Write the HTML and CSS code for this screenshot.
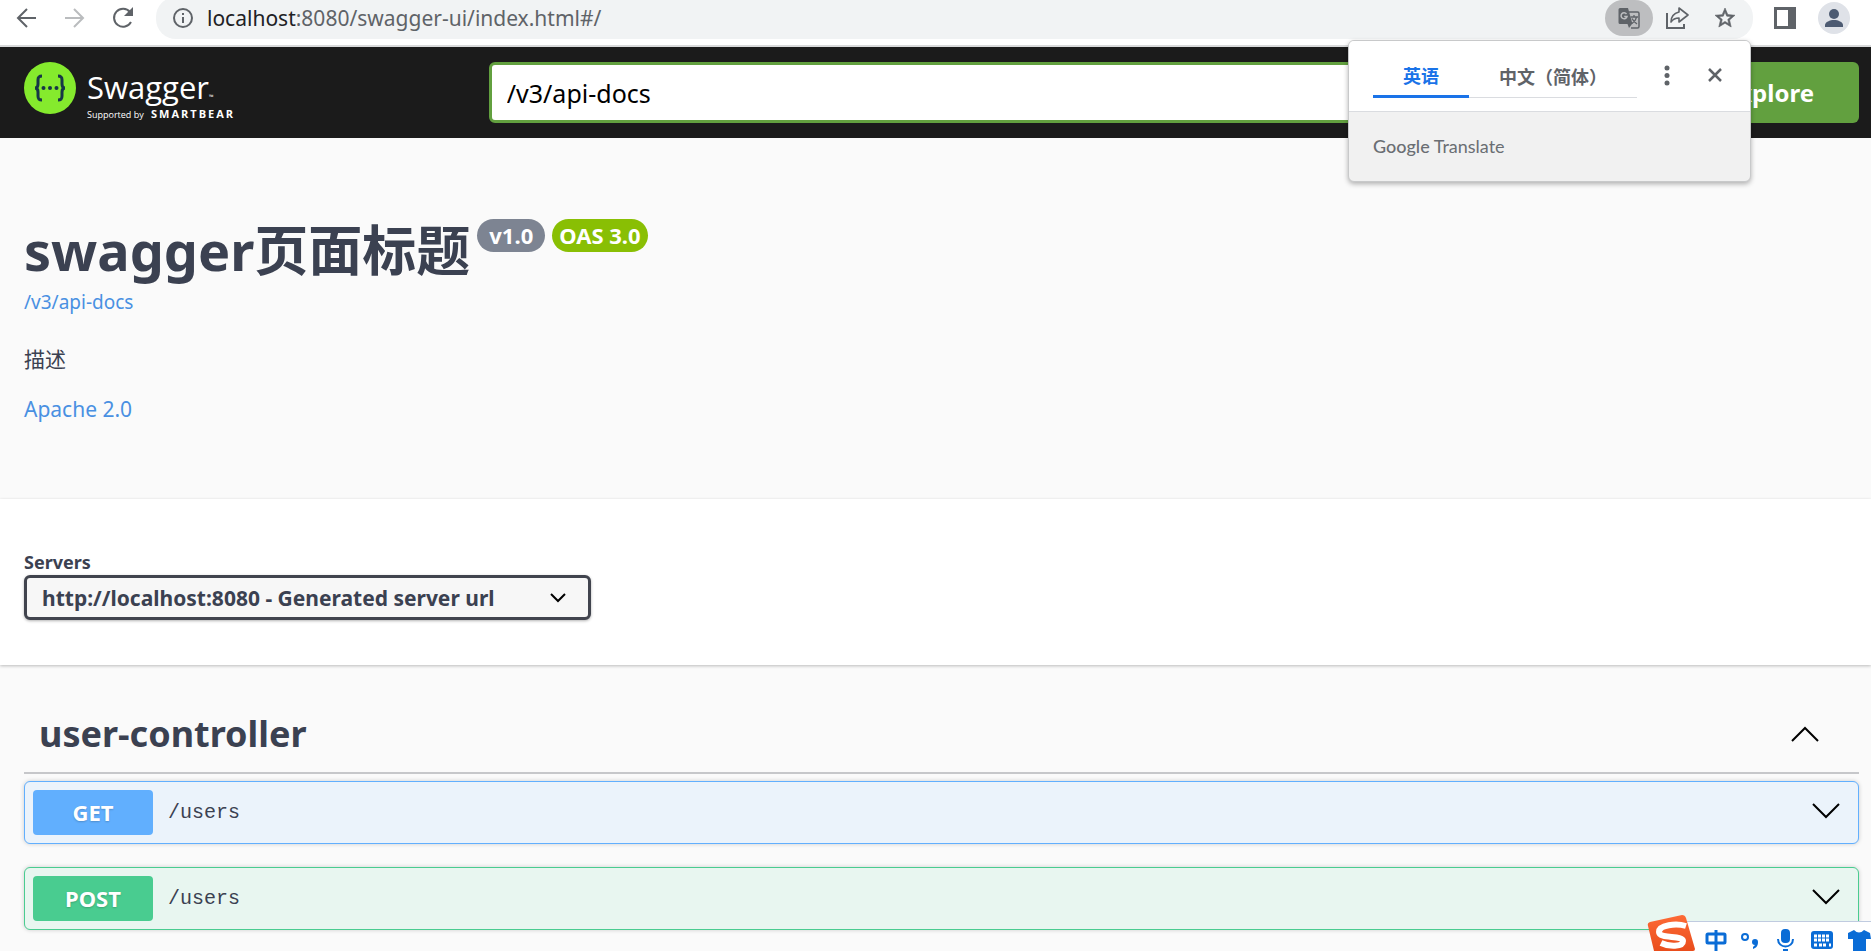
FILE: index.html
```html
<!DOCTYPE html>
<html lang="en">
  <head>
    <meta charset="UTF-8" />
    <meta name="viewport" content="width=device-width, initial-scale=1.0" />
    <title>Swagger UI</title>
    <link rel="stylesheet" href="styles.css">
  </head>
  <body>
    <!-- Browser toolbar -->
    <header class="browser-bar">
      <nav class="browser-nav">
        <button type="button" class="icon-button" aria-label="Back">
          <svg width="24" height="24" viewBox="0 0 24 24" fill="none" stroke="#5f6368" stroke-width="2"><path d="M21 12H3M12 3l-9 9 9 9" /></svg>
        </button>
        <button type="button" class="icon-button" aria-label="Forward">
          <svg width="24" height="24" viewBox="0 0 24 24" fill="none" stroke="#babcbe" stroke-width="2"><path d="M2 12h18M11 3l9 9-9 9" /></svg>
        </button>
        <button type="button" class="icon-button" aria-label="Reload">
          <svg width="24" height="24" viewBox="0 0 24 24" fill="none" stroke="#5f6368" stroke-width="2"><path d="M20 16a9 9 0 1 1-1-10l2 2" /><path d="M22 1v9h-9z" fill="#5f6368" stroke="none" /></svg>
        </button>
      </nav>
      <div class="address">
        <svg width="22" height="22" viewBox="0 0 22 22" fill="none" stroke="#5f6368" stroke-width="2"><circle cx="11" cy="11" r="9" /><path d="M11 10v6M11 6v2" /></svg>
        <span class="address-text"><b>localhost</b>:8080/swagger-ui/index.html#/</span>
        <button type="button" class="icon-button translate-button" aria-label="Translate this page">
          <svg width="24" height="24" viewBox="0 0 24 24" fill="none">
            <path d="M12 6h8.500a1.500 1.500 0 0 1 1.500 1.500v13a1.500 1.500 0 0 1-1.500 1.500H14" stroke="#5f6368" stroke-width="1.500" />
            <path d="M3 2h8l4.500 16H3a1.500 1.500 0 0 1-1.500-1.500v-13A1.500 1.500 0 0 1 3 2z" fill="#5f6368" />
            <path d="M10.500 18h4.500l-3 4z" fill="#5f6368" />
            <path d="M9.500 8A3 3 0 1 0 10 10.500H7.200" stroke="#bdbec0" stroke-width="1.500" />
            <path d="M13.500 11H21M17 9v2M19.500 11c-.5 3-2.500 5-4.500 6.500M15 12.500c1 2 3 4 5 5.500" stroke="#5f6368" stroke-width="1.300" />
          </svg>
        </button>
        <button type="button" class="icon-button" aria-label="Share this page">
          <svg width="24" height="24" viewBox="0 0 24 24" fill="none" stroke="#5f6368" stroke-width="2"><path d="M2 7v15h17v-4" /><path d="M14 2l9 7-9 7v-4c-4 0-6 1-8 4 0-6 4-9 8-10z" stroke-linejoin="round" stroke-width="1.600" /></svg>
        </button>
        <button type="button" class="icon-button" aria-label="Bookmark this page">
          <svg width="24" height="24" viewBox="0 0 24 24" fill="#5f6368" stroke="#5f6368" stroke-width=".6"><path d="M22 9.240l-7.190-.62L12 2 9.190 8.630 2 9.240l5.460 4.730L5.820 21 12 17.270 18.180 21l-1.630-7.030L22 9.240zM12 15.400l-3.760 2.270 1-4.280-3.320-2.880 4.380-.38L12 6.100l1.710 4.040 4.380.38-3.320 2.880 1 4.280L12 15.400z" /></svg>
        </button>
      </div>
      <button type="button" class="icon-button" aria-label="Side panel">
        <svg width="22" height="22" viewBox="0 0 22 22"><path d="M0 0h22v22H0z" fill="#5f6368" /><path d="M3 3h11v16H3z" fill="#fff" /></svg>
      </button>
      <button type="button" class="icon-button" aria-label="Profile">
        <svg width="34" height="34" viewBox="0 0 34 34"><circle cx="17" cy="17" r="16" fill="#dfe2e8" /><circle cx="17" cy="13" r="5" fill="#4d5b72" /><path d="M8 26v-2c0-3 5-5 9-5s9 2 9 5v2z" fill="#4d5b72" /></svg>
      </button>

      <div class="translate-popup">
        <div class="translate-head">
          <div class="translate-tabs">
            <button type="button" class="translate-tab active" lang="zh">英语</button>
            <button type="button" class="translate-tab" lang="zh">中文（简体）</button>
          </div>
          <button type="button" class="icon-button" aria-label="Translate options">
            <svg width="24" height="24" viewBox="0 0 24 24" fill="#5f6368"><circle cx="12" cy="4" r="2.500" /><circle cx="12" cy="11.500" r="2.500" /><circle cx="12" cy="19" r="2.500" /></svg>
          </button>
          <button type="button" class="icon-button" aria-label="Close">
            <svg width="24" height="24" viewBox="0 0 24 24" stroke="#5f6368" stroke-width="2.500"><path d="M6 5l12 12M18 5L6 17" /></svg>
          </button>
        </div>
        <div class="translate-body"><b>Google</b> Translate</div>
      </div>
    </header>

    <!-- Swagger top bar -->
    <div class="topbar">
      <a href="#" class="logo">
        <svg width="52" height="52" viewBox="0 0 52 52">
          <circle cx="26" cy="26" r="26" fill="#85ea2d" />
          <path d="M18 14c-3 0-4 1-4 4v4c0 3-1 4-3 4 2 0 3 1 3 4v4c0 3 1 4 4 4M34 14c3 0 4 1 4 4v4c0 3 1 4 3 4-2 0-3 1-3 4v4c0 3-1 4-4 4" fill="none" stroke="#173647" stroke-width="3" />
          <circle cx="19.500" cy="26" r="2" fill="#173647" /><circle cx="26" cy="26" r="2" fill="#173647" /><circle cx="32.500" cy="26" r="2" fill="#173647" />
        </svg>
        <span class="logo-text">
          <span class="logo-name">Swagger<small>™</small></span>
          <span class="logo-by">Supported by <b>SMARTBEAR</b></span>
        </span>
      </a>
      <form class="download-url">
        <input type="text" class="download-url-input" aria-label="Definition URL" value="/v3/api-docs" />
        <button type="submit" class="download-url-button">Explore</button>
      </form>
    </div>

    <!-- API info -->
    <section class="info">
      <div class="info-title">
        <h1>swagger<span lang="zh">页面标题</span></h1>
        <span class="badge">v1.0</span>
        <span class="badge badge-oas">OAS 3.0</span>
      </div>
      <a href="/v3/api-docs" class="info-url">/v3/api-docs</a>
      <p class="info-description" lang="zh">描述</p>
      <a href="#" class="info-license">Apache 2.0</a>
    </section>

    <section class="servers">
      <label for="servers">Servers</label>
      <div class="select-wrap">
        <select id="servers">
          <option>http://localhost:8080 - Generated server url</option>
        </select>
        <svg class="select-arrow" width="16" height="10" viewBox="0 0 16 10" fill="none" stroke="#000" stroke-width="2"><path d="M1 1l7 7 7-7" /></svg>
      </div>
    </section>

    <!-- Operations -->
    <main class="operations">
      <div class="tag">
        <h2>user-controller</h2>
        <button type="button" class="icon-button" aria-label="Collapse operation">
          <svg width="28" height="16" viewBox="0 0 28 16" fill="none" stroke="#000" stroke-width="2"><path d="M1 15L14 2l13 13" /></svg>
        </button>
      </div>
      <div class="opblock opblock-get">
        <span class="method">GET</span>
        <a href="#" class="path">/users</a>
        <button type="button" class="icon-button" aria-label="Expand get /users">
          <svg width="28" height="16" viewBox="0 0 28 16" fill="none" stroke="#000" stroke-width="2"><path d="M1 1l13 13L27 1" /></svg>
        </button>
      </div>
      <div class="opblock opblock-post">
        <span class="method">POST</span>
        <a href="#" class="path">/users</a>
        <button type="button" class="icon-button" aria-label="Expand post /users">
          <svg width="28" height="16" viewBox="0 0 28 16" fill="none" stroke="#000" stroke-width="2"><path d="M1 1l13 13L27 1" /></svg>
        </button>
      </div>
    </main>

    <!-- Input method bar -->
    <div class="ime-bar">
      <svg class="ime-logo" width="50" height="38" viewBox="0 0 50 38">
        <defs><linearGradient id="ime" x1="0" y1="0" x2="0" y2="1"><stop offset="0" stop-color="#fd6a36" /><stop offset="1" stop-color="#e94d1c" /></linearGradient></defs>
        <path d="M4 9L36 2q3 0 4 3l9 31q0 2-2 2H8L2 13q-1-3 2-4z" fill="url(#ime)" />
        <path d="M40 13c-10-3-27-1-27 6 0 7 24 3 24 9 0 6-14 6-22 2" fill="none" stroke="#fff" stroke-width="6" />
      </svg>
      <svg width="22" height="22" viewBox="0 0 22 22" fill="none" stroke="#0a6cd6" stroke-width="3"><rect x="2" y="5" width="18" height="9" rx="1" /><path d="M11 1v21" /></svg>
      <svg width="22" height="22" viewBox="0 0 22 22"><circle cx="5" cy="8" r="3" fill="none" stroke="#0a6cd6" stroke-width="2" /><path d="M12 13a3 3 0 1 1 6 0c0 4-2 6-5 7v-2l2-2a3 3 0 0 1-3-3z" fill="#0a6cd6" /></svg>
      <svg width="22" height="22" viewBox="0 0 22 22"><rect x="6" y="0" width="9" height="14" rx="4" fill="#0a6cd6" /><path d="M3 10c0 10 15 10 15 0M8 21h5" fill="none" stroke="#0a6cd6" stroke-width="2" /></svg>
      <svg width="24" height="22" viewBox="0 0 24 22"><rect x="1" y="2" width="22" height="18" rx="3" fill="#0a6cd6" /><path d="M4 7h16M4 11h16M4 16h3M9 16h8M19 16h2" stroke="#fff" stroke-width="3" stroke-dasharray="3 1" /></svg>
      <svg width="24" height="22" viewBox="0 0 24 22"><path d="M1 4l6-3q5 5 10 0l6 3 1 6h-5v12H6V10H1z" fill="#0a6cd6" /></svg>
    </div>
  </body>
</html>
```

FILE: styles.css
```css
* {
  box-sizing: border-box;
}

body {
  margin: 0;
  min-height: 100vh;
  background-color: #fafafa;
  color: #3b4151;
  font-family: "Noto Sans", "Noto Sans CJK SC", sans-serif;
  overflow-x: hidden;
}

h1,
h2,
p {
  margin: 0;
}

a {
  color: #4990e2;
  text-decoration: none;
}

svg {
  display: block;
  flex: none;
}

.icon-button {
  padding: 0;
  border: none;
  background: none;
  cursor: pointer;
}

/* Browser toolbar */
.browser-bar {
  position: relative;
  display: flex;
  align-items: center;
  gap: 21px;
  height: 47px;
  padding: 0 20px 10px 15px;
  background-color: white;
  border-bottom: 2px solid #d9dadb;
}

.browser-nav {
  display: flex;
  gap: 24px;
}

.address {
  flex: 1;
  display: flex;
  align-items: center;
  gap: 24px;
  height: 42px;
  padding: 0 16px;
  border-radius: 20px;
  background-color: #f1f3f4;
}

.address-text {
  flex: 1;
  margin-left: -11px;
  font-size: 21px;
  color: #5f6368;
}

.address-text b {
  font-weight: normal;
  color: #202124;
}

.translate-button {
  margin-right: -12px;
  padding: 6px 12px;
  border-radius: 18px;
  background-color: #bdbec0;
}

.translate-popup {
  position: absolute;
  z-index: 2;
  top: 40px;
  right: 120px;
  width: 403px;
  border: 1px solid #c8c9ca;
  border-radius: 6px;
  background-color: #f1f1f1;
  box-shadow: 0 2px 5px rgba(0, 0, 0, 0.3);
  overflow: hidden;
}

.translate-head {
  display: flex;
  align-items: center;
  gap: 24px;
  height: 71px;
  padding: 0 23px 0 24px;
  background-color: white;
  border-bottom: 1px solid #dadce0;
}

.translate-tabs {
  flex: 1;
  display: flex;
  margin-right: -8px;
}

.translate-tab {
  padding: 8px 30px 7px;
  border: none;
  border-bottom: 1px solid #dadce0;
  background: none;
  font-family: "Noto Sans CJK SC", sans-serif;
  font-size: 18px;
  font-weight: bold;
  color: #5f6368;
  white-space: nowrap;
}

.translate-tab.active {
  border-bottom: 3px solid #1a73e8;
  color: #1a73e8;
}

.translate-body {
  padding: 22px 24px 23px;
  font-family: Lato, sans-serif;
  font-size: 18px;
  line-height: 24px;
  color: #6a6e73;
}

.translate-body b {
  font-weight: 500;
}

/* Swagger top bar */
.topbar {
  display: flex;
  align-items: center;
  gap: 8px;
  height: 91px;
  padding: 0 12px 0 24px;
  background-color: #1b1b1b;
}

.logo {
  flex: 1;
  display: flex;
  gap: 11px;
  color: white;
}

.logo-text {
  display: flex;
  flex-direction: column;
  padding-top: 5px;
  font-family: "Open Sans", sans-serif;
}

.logo-name {
  font-size: 31px;
  line-height: 40px;
}

.logo-name small {
  font-size: 6px;
  line-height: 1;
}

.logo-by {
  font-size: 9px;
  line-height: 16px;
}

.logo-by b {
  margin-left: 5px;
  font-size: 11px;
  line-height: 1;
  letter-spacing: 2px;
}

.download-url {
  flex: 3;
  display: flex;
}

.download-url-input {
  flex: 1;
  min-width: 0;
  height: 61px;
  padding: 0 15px;
  border: 3px solid #62a03f;
  border-radius: 6px 0 0 6px;
  font-family: inherit;
  font-size: 25px;
  outline: none;
}

.download-url-button {
  padding: 0 45px;
  border: none;
  border-radius: 0 6px 6px 0;
  background-color: #62a03f;
  color: white;
  font-family: inherit;
  font-size: 24px;
  font-weight: bold;
}

/* API info */
.info {
  display: flex;
  flex-direction: column;
  align-items: flex-start;
  padding: 75px 24px 76px;
}

.info-title {
  display: flex;
  align-items: flex-start;
  gap: 7px;
}

.info-title h1 {
  font-size: 54px;
  line-height: 74px;
}

.badge {
  margin-top: 6px;
  padding: 0 12px;
  border-radius: 17px;
  background-color: #7d8492;
  color: white;
  font-size: 22px;
  font-weight: bold;
  line-height: 33px;
}

.badge-oas {
  padding: 0 7px;
  background-color: #89bf04;
}

.info-url {
  font-size: 19px;
  line-height: 30px;
}

.info-description {
  margin: 28px 0 22px;
  font-size: 21px;
  line-height: 28px;
}

.info-license {
  font-size: 21px;
  line-height: 28px;
}

/* Servers */
.servers {
  padding: 50px 24px 45px;
  background-color: white;
  box-shadow: 0 1px 3px rgba(0, 0, 0, 0.25);
}

.servers label {
  display: block;
  font-size: 18px;
  font-weight: bold;
  line-height: 26px;
}

.select-wrap {
  position: relative;
  display: inline-block;
  vertical-align: top;
}

.select-wrap select {
  appearance: none;
  height: 45px;
  padding: 0 93px 0 15px;
  border: 3px solid #41444e;
  border-radius: 6px;
  background-color: #f7f7f7;
  box-shadow: 0 1px 3px rgba(0, 0, 0, 0.3);
  color: #3b4151;
  font-family: inherit;
  font-size: 21px;
  font-weight: bold;
}

.select-arrow {
  position: absolute;
  top: 18px;
  right: 25px;
  pointer-events: none;
}

/* Operations */
.operations {
  padding: 30px 12px 20px 24px;
}

.tag {
  display: flex;
  align-items: center;
  justify-content: space-between;
  margin-bottom: 7px;
  padding: 0 40px 0 15px;
  border-bottom: 2px solid #c6c7ca;
}

.tag h2 {
  font-size: 36px;
  line-height: 77px;
}

.opblock {
  display: flex;
  align-items: center;
  gap: 15px;
  margin-bottom: 23px;
  padding: 8px 18px 8px 8px;
  border: 1px solid;
  border-radius: 6px;
  box-shadow: 0 0 4px rgba(0, 0, 0, 0.19);
}

.opblock:last-child {
  margin-bottom: 0;
}

.opblock .icon-button {
  padding-bottom: 4px;
}

.opblock-get {
  border-color: #61affe;
  background-color: #ebf3fb;
}

.opblock-post {
  border-color: #49cc90;
  background-color: #e8f6f0;
}

.method {
  width: 120px;
  border-radius: 4px;
  color: white;
  font-size: 22px;
  font-weight: bold;
  line-height: 45px;
  text-align: center;
  text-shadow: 0 1px 2px rgba(0, 0, 0, 0.2);
}

.opblock-get .method {
  background-color: #61affe;
}

.opblock-post .method {
  background-color: #49cc90;
}

.path {
  flex: 1;
  color: #3b4151;
  font-family: "Liberation Mono", monospace;
  font-size: 20px;
}

/* Input method bar, pinned to the screen corner */
.ime-bar {
  position: fixed;
  right: 0;
  bottom: 0;
  display: flex;
  align-items: flex-end;
  gap: 13px;
  height: 30px;
  padding-left: 20px;
  background-color: white;
  border-top: 1px solid #c0cbe0;
}

.ime-logo {
  margin: 0 -4px 0 -34px;
}
```
